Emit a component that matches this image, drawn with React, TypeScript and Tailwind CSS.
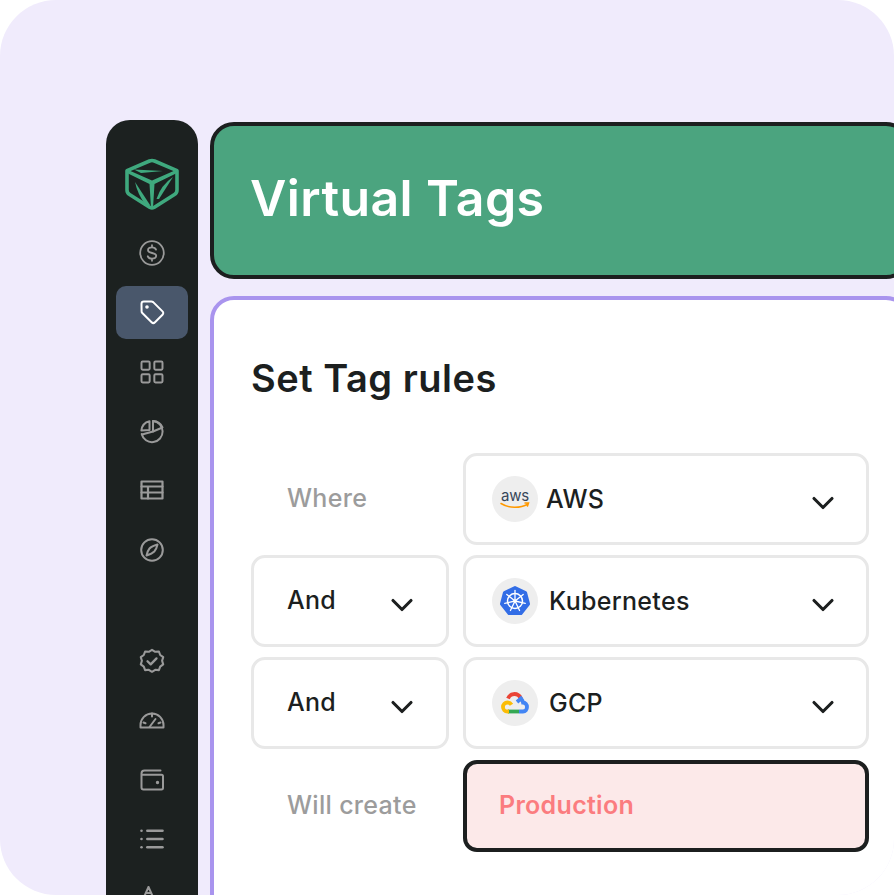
import type { ReactNode } from 'react'
import { ChevronDown, LayoutGrid, List } from 'lucide-react'

// ─── Sidebar icons ────────────────────────────────────────────────────────────

function Svg({ children, stroke = '#9a9a9a', width = 2 }: { children: ReactNode; stroke?: string; width?: number }) {
  return (
    <svg width="26" height="26" viewBox="0 0 26 26" fill="none" stroke={stroke} strokeWidth={width} strokeLinecap="round" strokeLinejoin="round">
      {children}
    </svg>
  )
}

function Logo() {
  return (
    <svg width="54" height="52" viewBox="0 0 54 52" fill="none">
      <path d="M24.500 3 Q27 2 29.500 3 L52 12.700 V32 Q52 35 49.500 36.500 L29 49.500 Q27 50.500 25 49.500 L4.500 36.500 Q2 35 2 32 V12.700 Z" stroke="#3fa97e" strokeWidth="3.600" strokeLinejoin="round" />
      <path d="M2 11.500 L27 22.500 L52 11.500 L52 15 L29.500 26 L28 50 L26 50 L24.500 26 L2 15 Z" fill="#3fa97e" />
      <path d="M9 11.500 L38 13 L16 15 Z" fill="#3fa97e" />
      <path d="M10 24 L25 47 L20.500 47 Q12.500 36 10 24 Z" fill="#3fa97e" />
      <path d="M48 19 L34 41 L31.500 41 Q36 27 48 19 Z" fill="#3fa97e" />
    </svg>
  )
}

function DollarIcon() {
  return (
    <Svg width={1.8}>
      <circle cx="13" cy="13" r="11.800" />
      <path d="M17 9.600c-.6-1.500-2-2.200-4-2.200-2.300 0-4 1.100-4 2.800 0 3.800 8.200 1.800 8.200 5.600 0 1.700-1.800 2.800-4.200 2.800-2 0-3.600-.8-4.200-2.300M13 5.200v2.200M13 18.600v2.200" />
    </Svg>
  )
}

function TagIcon() {
  return (
    <Svg stroke="#ffffff">
      <path d="M2.500 4.800c0-1.400 1-2.400 2.400-2.400h7.500c.7 0 1.300.3 1.800.7l9.300 9.300c1 1 1 2.400 0 3.400l-7.500 7.500c-1 1-2.400 1-3.400 0l-9.300-9.300c-.5-.5-.7-1.100-.7-1.800z" />
      <circle cx="8" cy="8" r=".8" fill="#ffffff" />
    </Svg>
  )
}

function PieIcon() {
  return (
    <Svg>
      <path d="M14 3a10.600 10.600 0 1 1-11.300 13" />
      <path d="M14 3v10.500L23.500 9.500A10.600 10.600 0 0 0 14 3z" />
      <path d="M10.500 3.200A10.600 10.600 0 0 0 2.400 12.500l8.100-.5z" />
      <path d="M14 13.500L3 16.500" />
    </Svg>
  )
}

function TableIcon() {
  return (
    <Svg width={2.2}>
      <path d="M2.500 4.500h21v17h-21z" />
      <path d="M2.500 9.500h21M2.500 15.500h21M9 9.500v12" />
    </Svg>
  )
}

function CompassIcon() {
  return (
    <Svg>
      <circle cx="13" cy="13" r="10.800" />
      <path d="M18.500 7.500c-3.800 1-6.700 2.500-8 4-1.100 1.300-2.300 4-3 7 3-1 6.200-2.400 7.800-4 1.300-1.400 2.500-3.800 3.200-7z" />
    </Svg>
  )
}

function BadgeIcon() {
  return (
    <Svg width={2.1}>
      <path d="M13 1.800l3.200 2 3.700-.3 1.300 3.500 3 2.200-1.100 3.600 1.100 3.600-3 2.200-1.300 3.500-3.700-.3-3.200 2-3.200-2-3.700.3-1.300-3.500-3-2.200 1.100-3.600-1.100-3.600 3-2.200 1.300-3.500 3.700.3z" />
      <path d="M8.500 13.200l3.200 3.200 5.800-6" strokeWidth="2.300" />
    </Svg>
  )
}

function GaugeIcon() {
  return (
    <Svg>
      <path d="M1.500 20.500V18a11.500 11.500 0 0 1 23 0v2.500z" />
      <path d="M13 6.500v3M4.500 15.500l2 .8M21.500 15.500l-2 .8M10.500 20l6-8" />
    </Svg>
  )
}

function WalletIcon() {
  return (
    <Svg>
      <path d="M21.500 3.500H5.500c-1.700 0-3 1.200-3 3v14c0 1.200 1 2 2 2h18c1 0 1.500-.8 1.500-1.700V9.500c0-1-.5-1.700-1.500-1.700H2.500" />
      <circle cx="18.500" cy="15.500" r=".7" fill="#9a9a9a" />
    </Svg>
  )
}

function TriangleIcon() {
  return (
    <Svg>
      <path d="M9.500 2L5 12M9.500 2L14 12M7 8h5" />
    </Svg>
  )
}

function NavItem({ children, active }: { children: ReactNode; active?: boolean }) {
  return (
    <div className="flex h-[59.3px] w-full shrink-0 items-center justify-center">
      {active ? (
        <div className="flex h-[53px] w-[72px] items-center justify-center rounded-[10px] bg-[#49576b]">{children}</div>
      ) : (
        children
      )}
    </div>
  )
}

function Sidebar() {
  return (
    <aside className="flex h-[800px] w-[92px] shrink-0 flex-col items-center rounded-t-[24px] bg-[#1c2120] pt-[38px]">
      <div className="mb-[13.5px] flex h-[52px] shrink-0 items-center justify-center">
        <Logo />
      </div>
      <NavItem><DollarIcon /></NavItem>
      <NavItem active><TagIcon /></NavItem>
      <NavItem><LayoutGrid size={28} strokeWidth={1.7} color="#9a9a9a" /></NavItem>
      <NavItem><PieIcon /></NavItem>
      <NavItem><TableIcon /></NavItem>
      <NavItem><CompassIcon /></NavItem>
      <div className="h-[52px] shrink-0" />
      <NavItem><BadgeIcon /></NavItem>
      <NavItem><GaugeIcon /></NavItem>
      <NavItem><WalletIcon /></NavItem>
      <NavItem><List size={28} strokeWidth={2.2} color="#9a9a9a" /></NavItem>
      <NavItem><TriangleIcon /></NavItem>
    </aside>
  )
}

// ─── Provider logos ───────────────────────────────────────────────────────────

function AwsLogo() {
  return (
    <div className="flex h-[46px] w-[46px] flex-col items-center justify-center rounded-full bg-[#eeeeee]">
      <span className="text-[15px] leading-[13px] font-normal tracking-[-0.2px] text-[#37475a]">aws</span>
      <svg width="30" height="7" viewBox="0 0 30 7" fill="none" stroke="#f90" strokeWidth="1.500" strokeLinecap="round">
        <path d="M1 1.500c8 5 19 5 27 .5M25 1h3.500l-1 3" />
      </svg>
    </div>
  )
}

function K8sLogo() {
  const spokes = [0, 51.4, 102.8, 154.3, 205.7, 257.1, 308.6]
  return (
    <div className="flex h-[46px] w-[46px] items-center justify-center rounded-full bg-[#eeeeee]">
      <svg width="32" height="32" viewBox="0 0 32 32" fill="none">
        <path d="M16 2.500 L26.500 7.500 L29.500 19 L22 28.500 H10 L2.500 19 L5.500 7.500 Z" fill="#326de6" stroke="#326de6" strokeWidth="3" strokeLinejoin="round" />
        <circle cx="16" cy="16" r="7.500" stroke="#fff" strokeWidth="1.500" />
        <circle cx="16" cy="16" r="1.800" fill="#fff" />
        {spokes.map((deg) => (
          <path key={deg} d="M16 16V5.500" stroke="#fff" strokeWidth="1.300" strokeLinecap="round" transform={`rotate(${deg} 16 16)`} />
        ))}
      </svg>
    </div>
  )
}

function GcpLogo() {
  return (
    <div className="flex h-[46px] w-[46px] items-center justify-center rounded-full bg-[#eeeeee]">
      <svg width="28" height="22" viewBox="0 0 28 22" fill="none" strokeWidth="3.800">
        <path d="M20 6.500C18.500 3.500 16 2 13.500 2 10.500 2 8 3.800 7 6.500" stroke="#ea4335" />
        <path d="M18 19.500h4c2.500 0 4-2 4-4.500 0-2.500-1.800-4.500-4-4.500-.3-1.500-1-2.800-2-4L16 10" stroke="#4285f4" />
        <path d="M7 19.500h11" stroke="#34a853" />
        <path d="M8 19.500H6.500C3.800 19.500 2 17.500 2 15c0-2.500 1.800-4.500 4.500-4.500 1.700 0 3.200.8 4 2.200" stroke="#fbbc05" />
      </svg>
    </div>
  )
}

// ─── Rule rows ────────────────────────────────────────────────────────────────

function AndSelect() {
  return (
    <div className="flex h-[92px] w-[198px] shrink-0 items-center justify-between rounded-[14px] border-[3.5px] border-[#e8e8e8] pr-[26px] pl-[33px]">
      <span className="text-[25px] font-medium tracking-[0.2px] text-[#1c1f1f]">And</span>
      <ChevronDown size={36} strokeWidth={2.1} color="#1c1f1f" className="mt-[8px]" />
    </div>
  )
}

function ProviderSelect({ logo, label, gap }: { logo: ReactNode; label: string; gap: string }) {
  return (
    <div className="flex h-[92px] w-[406px] items-center justify-between rounded-[14px] border-[3.5px] border-[#e8e8e8] pr-[25px] pl-[26px]">
      <div className={`flex items-center ${gap}`}>
        {logo}
        <span className="mt-[2px] text-[25px] font-medium tracking-[0.3px] text-[#1c1f1f]">{label}</span>
      </div>
      <ChevronDown size={36} strokeWidth={2.1} color="#1c1f1f" className="mt-[8px]" />
    </div>
  )
}

function Label({ children }: { children: ReactNode }) {
  return (
    <div className="w-[198px] shrink-0 pl-[36px] text-[25px] font-medium tracking-[0.3px] whitespace-nowrap text-[#9c9c9c]">{children}</div>
  )
}

// ─── Main ─────────────────────────────────────────────────────────────────────

export default function App() {
  return (
    <div className="h-[895px] w-[894px] overflow-hidden bg-white font-['Inter','Liberation_Sans',sans-serif]">
      <div className="flex h-full gap-[12px] overflow-hidden rounded-[56px] bg-[#f0ebfc] pt-[120px] pl-[106px]">
        <Sidebar />
        <main className="flex w-[700px] shrink-0 flex-col gap-[17px] pt-[2px]">
          <header className="flex h-[157px] shrink-0 items-center rounded-[24px] border-[4px] border-[#1c1f1f] bg-[#4ba47f] pb-[4px] pl-[36px]">
            <h1 className="text-[50px] font-semibold tracking-[0.4px] text-white">Virtual Tags</h1>
          </header>
          <section className="h-[640px] shrink-0 rounded-[24px] border-[4px] border-[#a994ee] bg-white pt-[52px] pl-[37px]">
            <h2 className="text-[38px] leading-[52px] font-semibold tracking-[0.5px] text-[#1c1f1f]">Set Tag rules</h2>
            <div className="mt-[49px] flex flex-col gap-[10px]">
              <div className="flex items-center gap-[14px]">
                <Label>Where</Label>
                <ProviderSelect logo={<AwsLogo />} label="AWS" gap="gap-[8px]" />
              </div>
              <div className="flex items-center gap-[14px]">
                <AndSelect />
                <ProviderSelect logo={<K8sLogo />} label="Kubernetes" gap="gap-[11px]" />
              </div>
              <div className="flex items-center gap-[14px]">
                <AndSelect />
                <ProviderSelect logo={<GcpLogo />} label="GCP" gap="gap-[11px]" />
              </div>
              <div className="mt-[1px] flex items-center gap-[14px]">
                <Label>Will create</Label>
                <div className="flex h-[92px] w-[406px] items-center rounded-[14px] border-[4px] border-[#1c1f1f] bg-[#fce9e9] pl-[32px]">
                  <span className="text-[25px] font-semibold tracking-[0.3px] text-[#fb7c7f]">Production</span>
                </div>
              </div>
            </div>
          </section>
        </main>
      </div>
    </div>
  )
}
